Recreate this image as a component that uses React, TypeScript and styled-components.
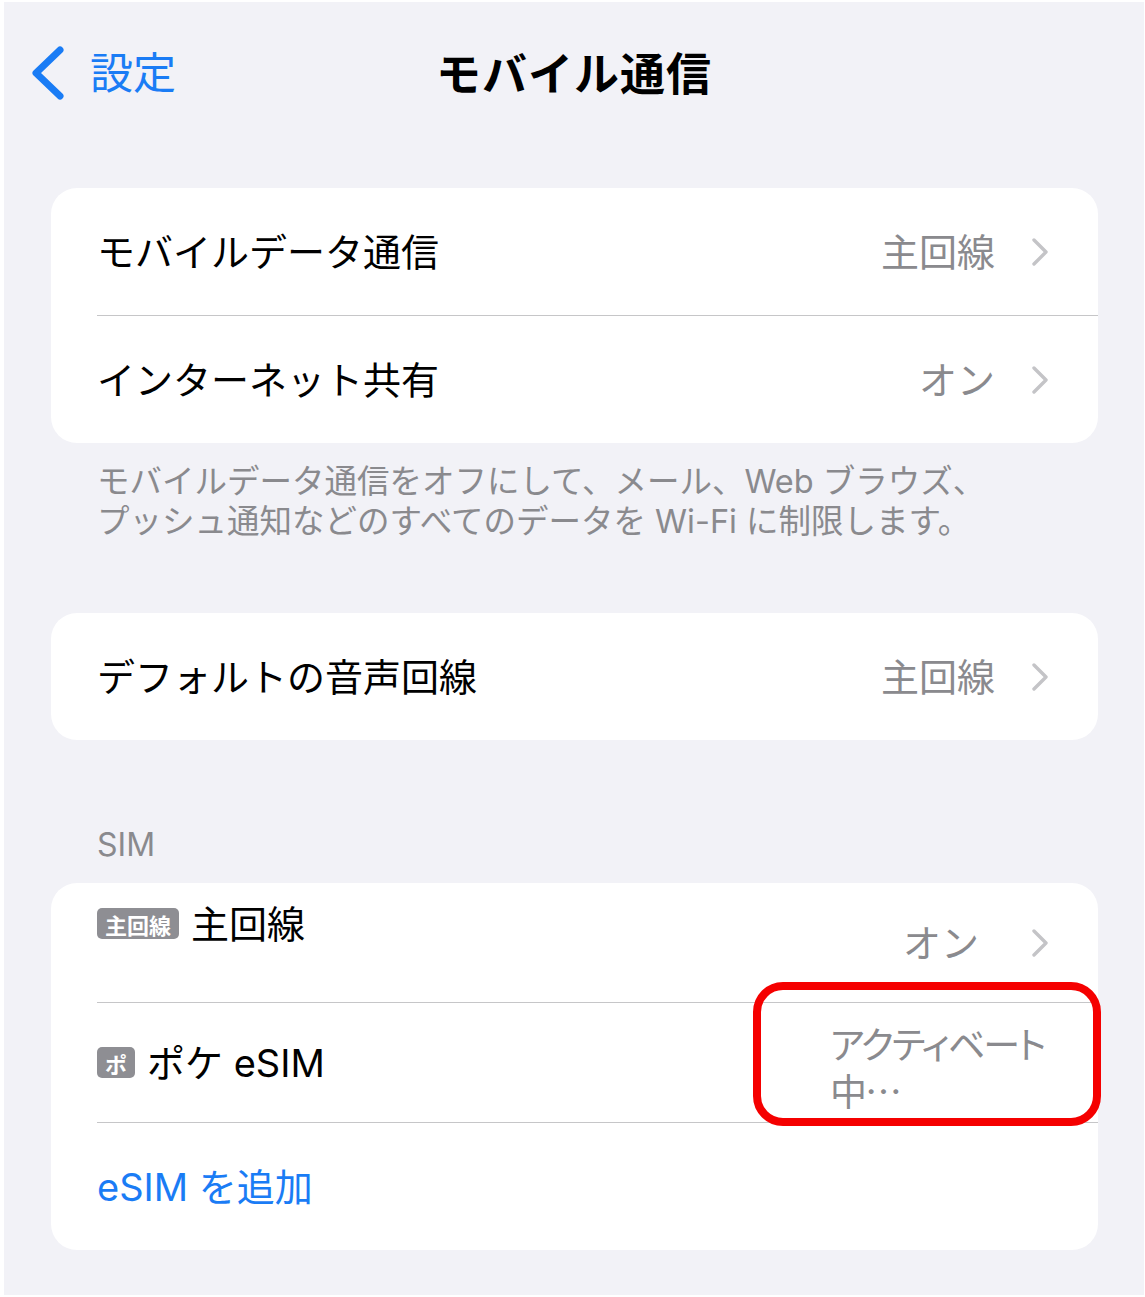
import React from 'react';
import styled, { createGlobalStyle } from 'styled-components';

const GlobalStyle = createGlobalStyle`
  html, body {
    margin: 0;
    padding: 0;
    background: #ffffff;
  }
  body {
    font-family: "Inter", "Noto Sans CJK JP", sans-serif;
    -webkit-font-smoothing: antialiased;
  }
`;

const Screen = styled.div`
  margin: 2px 1px 2px 4px;
  width: 1140px;
  height: 1293px;
  background: #f2f2f7;
  overflow: hidden;
`;

const NavBar = styled.header`
  height: 142px;
  display: grid;
  grid-template-columns: 1fr auto 1fr;
  align-items: center;
  padding: 0 26px;
`;

const BackButton = styled.div`
  display: flex;
  align-items: center;
  gap: 26px;
  color: #1a7cf5;
  font-size: 43px;
  line-height: 1;
`;

const Title = styled.h1`
  margin: 0 0 4px;
  font-size: 45px;
  font-weight: 700;
  color: #000;
  letter-spacing: 1px;
`;

const Content = styled.main`
  padding: 44px 46px 0 47px;
`;

const Card = styled.section<{ $gap?: number }>`
  position: relative;
  margin-top: ${({ $gap }) => $gap || 0}px;
  background: #ffffff;
  border-radius: 26px;
`;

const Row = styled.div<{ $height: number; $divider?: boolean }>`
  height: ${({ $height }) => $height}px;
  display: flex;
  align-items: center;
  padding: 0 50px 0 46px;
  position: relative;
  ${({ $divider }) =>
    $divider &&
    `
    margin-top: 1px;
    &::before {
      content: "";
      position: absolute;
      top: -1px;
      left: 46px;
      right: 0;
      height: 1px;
      background: #c6c6c8;
    }
  `}
`;

const Label = styled.div<{ $raise?: number }>`
  flex: 1;
  display: flex;
  align-items: center;
  gap: 12px;
  font-size: 38px;
  line-height: 46px;
  color: #000;
  transform: translateY(${({ $raise }) => -($raise || 0)}px);
`;

const Value = styled.div<{ $inset?: number }>`
  margin-right: ${({ $inset }) => $inset || 0}px;
  font-size: 38px;
  line-height: 46px;
  color: #8a8a8e;
`;

const WrappedValue = styled.div`
  width: 222px;
  margin-right: -4px;
  font-family: "Noto Sans CJK JP", sans-serif;
  font-size: 37px;
  line-height: 47px;
  letter-spacing: -2px;
  color: #8a8a8e;
  font-feature-settings: "palt";
  transform: translateY(4px);
`;

const Chevron = styled.span`
  display: flex;
  margin-left: 37px;
`;

const Badge = styled.span`
  display: inline-flex;
  align-items: center;
  justify-content: center;
  height: 31px;
  padding: 0 8px;
  border-radius: 5px;
  background: #8e8e93;
  color: #fff;
  font-family: "Noto Sans CJK JP", sans-serif;
  font-size: 22px;
  font-weight: 700;
  line-height: 1;
`;

const LinkText = styled.div`
  font-size: 38px;
  line-height: 46px;
  color: #1a7cf5;
`;

const Footer = styled.p`
  margin: 0;
  padding: 19px 46px 0 46px;
  font-size: 32.5px;
  line-height: 40px;
  color: #8a8a8e;
`;

const SectionHeader = styled.div`
  margin: 85px 0 18px;
  padding: 0 46px;
  font-size: 32px;
  line-height: 40px;
  color: #8a8a8e;
`;

const Highlight = styled.div`
  position: absolute;
  left: 702px;
  top: 99px;
  width: 348px;
  height: 144px;
  box-sizing: border-box;
  border: 8px solid #f50000;
  border-radius: 30px;
  pointer-events: none;
`;

const ChevronIcon = () => (
  <Chevron>
    <svg width="16" height="28" viewBox="0 0 16 28" fill="none">
      <polyline points="2,2 14,14 2,26" stroke="#c4c4c7" strokeWidth="3.4" strokeLinecap="round" strokeLinejoin="round" />
    </svg>
  </Chevron>
);

export default function App() {
  return (
    <>
      <GlobalStyle />
      <Screen>
        <NavBar>
          <BackButton>
            <svg width="34" height="54" viewBox="0 0 34 54" fill="none">
              <polyline points="30,4 6,27 30,50" stroke="#1a7cf5" strokeWidth="7" strokeLinecap="round" strokeLinejoin="round" />
            </svg>
            <span>設定</span>
          </BackButton>
          <Title>モバイル通信</Title>
          <div />
        </NavBar>
        <Content>
          <Card>
            <Row $height={127}>
              <Label>モバイルデータ通信</Label>
              <Value>主回線</Value>
              <ChevronIcon />
            </Row>
            <Row $height={127} $divider>
              <Label>インターネット共有</Label>
              <Value>オン</Value>
              <ChevronIcon />
            </Row>
          </Card>
          <Footer>
            モバイルデータ通信をオフにして、メール、Web ブラウズ、
            <br />
            プッシュ通知などのすべてのデータを Wi-Fi に制限します。
          </Footer>
          <Card $gap={71}>
            <Row $height={127}>
              <Label>デフォルトの音声回線</Label>
              <Value>主回線</Value>
              <ChevronIcon />
            </Row>
          </Card>
          <SectionHeader>SIM</SectionHeader>
          <Card>
            <Row $height={119}>
              <Label $raise={19}>
                <Badge>主回線</Badge>
                主回線
              </Label>
              <Value $inset={16}>オン</Value>
              <ChevronIcon />
            </Row>
            <Row $height={119} $divider>
              <Label>
                <Badge>ポ</Badge>
                ポケ eSIM
              </Label>
              <WrappedValue>アクティベート中…</WrappedValue>
            </Row>
            <Row $height={127} $divider>
              <LinkText>eSIM を追加</LinkText>
            </Row>
            <Highlight />
          </Card>
        </Content>
      </Screen>
    </>
  );
}
